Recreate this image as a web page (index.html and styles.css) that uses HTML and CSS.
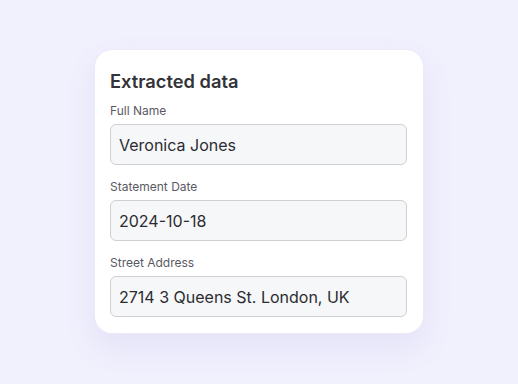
FILE: index.html
```html
<!DOCTYPE html>
<html>
<head>
<meta charset="utf-8">
<link rel="stylesheet" href="styles.css">
</head>
<body>
<div class="stage">
  <div class="card">
    <h2 class="title">Extracted data</h2>
    <div class="field">
      <div class="label">Full Name</div>
      <div class="input">Veronica Jones</div>
    </div>
    <div class="field">
      <div class="label">Statement Date</div>
      <div class="input">2024-10-18</div>
    </div>
    <div class="field">
      <div class="label">Street Address</div>
      <div class="input">2714 3 Queens St. London, UK</div>
    </div>
  </div>
</div>
</body>
</html>
```
FILE: styles.css
```css
html, body {
  margin: 0;
  padding: 0;
}
body {
  width: 518px;
  height: 384px;
  background: #f1f0fd;
  font-family: Inter, "Noto Sans", sans-serif;
  overflow: hidden;
}
.stage {
  padding-top: 49px;
  padding-left: 94px;
}
.card {
  width: 330px;
  box-sizing: border-box;
  background: #ffffff;
  border-radius: 18px;
  border: 1px solid #eceaf6;
  padding: 19px 16px 16px 15px;
  box-shadow: 0 14px 30px rgba(120, 110, 200, 0.10);
  display: flex;
  flex-direction: column;
  gap: 14px;
}
.title {
  margin: 0 0 -4px 0;
  font-size: 18.3px;
  line-height: 24px;
  font-weight: 600;
  color: #333338;
}
.field {
  display: flex;
  flex-direction: column;
  gap: 5px;
}
.label {
  font-size: 12px;
  line-height: 16px;
  color: #5a5a63;
}
.input {
  height: 41px;
  box-sizing: border-box;
  border: 1px solid #cfcfd4;
  border-radius: 6px;
  background: #f6f7f9;
  padding: 0 8px;
  display: flex;
  align-items: center;
  font-size: 16px;
  color: #2c2c30;
}
```
